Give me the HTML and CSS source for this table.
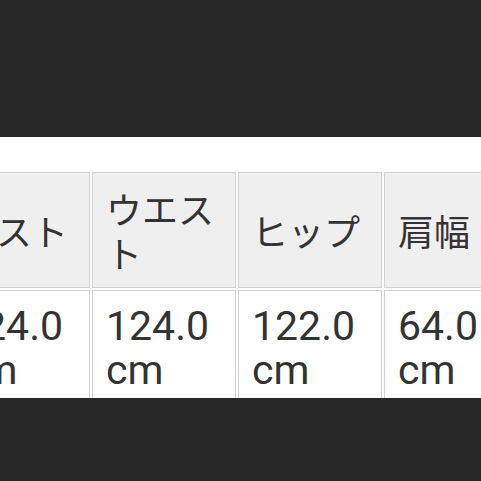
FILE: index.html
```html
<!DOCTYPE html>
<html lang="ja">
<head>
<meta charset="utf-8">
<title>サイズ表</title>
<link rel="stylesheet" href="styles.css">
</head>
<body>
<div class="sheet">
  <table class="size-table">
    <colgroup>
      <col class="col"><col class="col"><col class="col"><col class="col">
    </colgroup>
    <tr>
      <th class="head">バスト</th>
      <th class="head">ウエスト</th>
      <th class="head">ヒップ</th>
      <th class="head">肩幅</th>
    </tr>
    <tr>
      <td class="val">124.0 cm</td>
      <td class="val">124.0 cm</td>
      <td class="val">122.0 cm</td>
      <td class="val">64.0 cm</td>
    </tr>
  </table>
</div>
</body>
</html>
```
FILE: styles.css
```css
html, body {
  margin: 0;
  padding: 0;
}
body {
  background: #262626;
  width: 481px;
  height: 481px;
  overflow: hidden;
}
.sheet {
  margin-top: 137px;
  height: 261px;
  background: #ffffff;
  overflow: hidden;
  padding-top: 33px;
  box-sizing: border-box;
}
.size-table {
  margin-left: -56px;
  border-collapse: separate;
  border-spacing: 2px;
  table-layout: fixed;
  width: 586px;
}
.col {
  width: 144px;
}
.head, .val {
  border: 1px solid #d2d2d2;
  padding: 13px 13px;
  text-align: left;
  vertical-align: middle;
  color: #333333;
  line-height: 44px;
  font-weight: normal;
}
.head {
  background: #efefef;
  font-family: "Noto Sans CJK JP", sans-serif;
  font-size: 36px;
}
.val {
  background: #ffffff;
  font-family: Roboto, "Noto Sans CJK JP", sans-serif;
  font-size: 41px;
}
```
